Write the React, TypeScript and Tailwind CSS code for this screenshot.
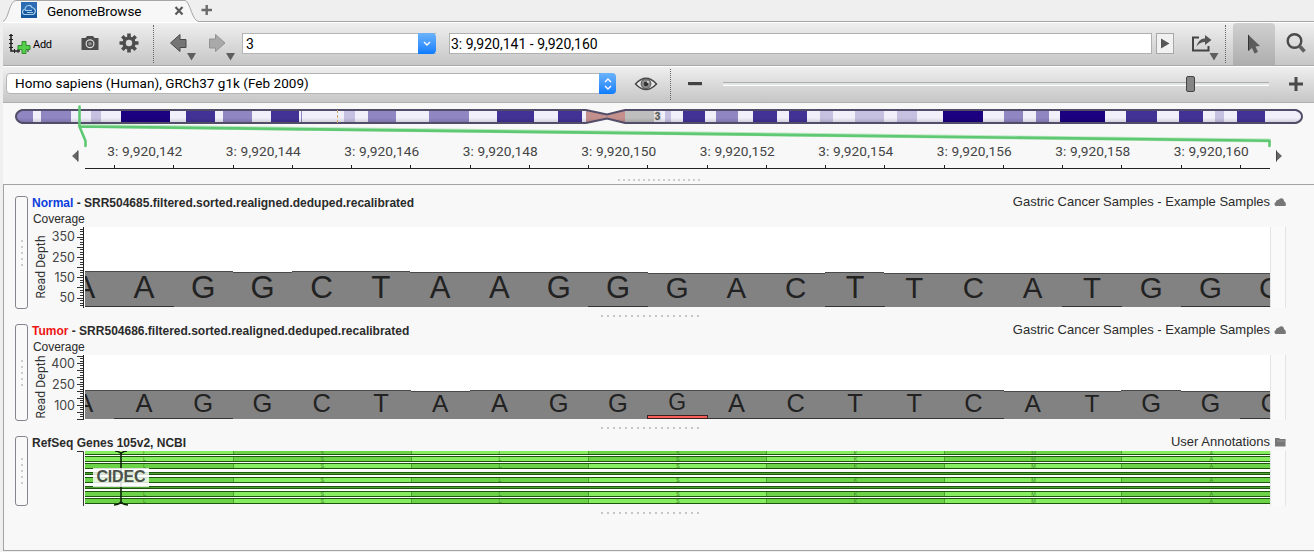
import React from "react";

const BASE_W = 59.25;
const FIRST_TICK = 114.6;

const bands: [number, number, string][] = [
  [15, 33, "#8f86c2"],
  [41, 71, "#8f86c2"],
  [91, 101, "#c6c1e1"],
  [121, 170, "#1b0080"],
  [186, 215, "#423296"],
  [223, 252, "#8f86c2"],
  [271, 299, "#423296"],
  [301, 302, "#8f86c2"],
  [344, 355, "#c6c1e1"],
  [368, 396, "#8f86c2"],
  [429, 469, "#8f86c2"],
  [497, 534, "#423296"],
  [558, 582, "#423296"],
  [625, 654, "#bebebe"],
  [665, 671, "#c6c1e1"],
  [683, 705, "#423296"],
  [716, 738, "#8f86c2"],
  [753, 777, "#423296"],
  [789, 807, "#423296"],
  [820, 833, "#c6c1e1"],
  [855, 884, "#c6c1e1"],
  [897, 917, "#c6c1e1"],
  [943, 983, "#1b0080"],
  [1004, 1023, "#8f86c2"],
  [1036, 1049, "#8f86c2"],
  [1060, 1105, "#1b0080"],
  [1126, 1157, "#423296"],
  [1179, 1203, "#423296"],
  [1215, 1224, "#c6c1e1"],
  [1237, 1265, "#423296"],
];

const sequence = "AAGGCTAAGGGACTTCATGGC".split("");

type Coverage = {
  y: number;
  h: number;
  labels: [number, number][];
  major: number;
  minor: number;
  firstTick: number;
  tops: [number, number, number][];
  floors: [number, number][];
  sizes: number[];
  baseline: number;
  variant?: boolean;
};

const normal: Coverage = {
  y: 227,
  h: 82,
  labels: [[350, 237], [250, 257.3], [150, 277.6], [50, 298]],
  major: 10.17,
  minor: 4,
  firstTick: 237,
  tops: [
    [85, 233, 271],
    [233, 292, 272],
    [292, 410, 271],
    [410, 648, 272],
    [648, 825, 273],
    [825, 884, 272],
    [884, 1270, 273],
  ],
  floors: [[85, 174], [588, 648], [825, 885], [1062, 1122], [1181, 1270]],
  sizes: [31.5, 31.5, 31.5, 31, 31.5, 31.5, 31, 31, 31, 31, 29.5, 29.5, 29.5, 30.5, 29.5, 29.5, 29.5, 29.5, 29.5, 29.5, 29.5],
  baseline: 297.7,
};

const tumor: Coverage = {
  y: 355,
  h: 66,
  labels: [[400, 363.7], [250, 384.5], [100, 405.4]],
  major: 6.95,
  minor: 3,
  firstTick: 363.6,
  tops: [
    [85, 411, 390],
    [411, 470, 391],
    [470, 1004, 390],
    [1004, 1121, 391],
    [1121, 1181, 390],
    [1181, 1270, 391],
  ],
  floors: [[114, 233], [708, 1004], [1240, 1270]],
  sizes: [25.5, 25.5, 25.5, 25.5, 25.5, 25.5, 24.5, 25.5, 25.5, 25.5, 23, 25.5, 25.5, 25.5, 25.5, 25.5, 24.5, 24.5, 25.5, 25, 25],
  baseline: 411.7,
  variant: true,
};

const geneRows: [number, number, boolean][] = [
  [450, 5, true],
  [456, 6, true],
  [463, 6, false],
  [477, 6, false],
  [491, 6, false],
  [498, 6, false],
];
const codonEdges = [85, 233, 411, 588, 766, 944, 1121, 1270];
const aminoAcids = ["L", "S", "L", "S", "K", "M", "A"];

function Divider() {
  return <div className="w-px my-[2px] self-stretch border-l border-dotted border-[#666]" />;
}

function Pic({ x, w, y = 23, h = 42, children }: { x: number; w: number; y?: number; h?: number; children: React.ReactNode }) {
  return (
    <svg width={w} height={h} viewBox={`${x} ${y} ${w} ${h}`} className="block shrink-0">
      {children}
    </svg>
  );
}

function Tabs() {
  return (
    <div className="relative h-[22px] shrink-0">
      <svg width={1314} height={22} className="absolute inset-0">
        <path d="M3 21.5 C9 19 9 1 16 .5 H185 C190 1 192 21.5 199 21.5 V22 H3Z" fill="#f7f7f7" />
        <path d="M3 21.5 C9 19 9 1 16 .5 H185 C190 1 192 21.5 199 21.5 H1314" fill="none" stroke="#a6a6a6" />
      </svg>
      <div className="relative flex h-full items-center pl-[21px]">
        <Pic x={21} y={0} w={16} h={22}>
          <rect x="21" y="2" width="16" height="16" fill="#17559c" />
          <rect x="21" y="2" width="16" height="8" fill="#2b6cb3" />
          <path d="M24.5 14.5 C21.5 13.5 22 9.5 25 9.5 C25.5 4.5 31 4.5 32 7.5 C36 8 36.5 13 33 14.5Z" fill="none" stroke="#a5cdec" strokeWidth="1.2" />
          <path d="M25 10.5 H32 M27 12.5 H33" stroke="#a5cdec" />
        </Pic>
        <span className="ml-[10px] w-[126px] font-[Roboto,sans-serif] text-[13.5px] leading-[22px] -tracking-[0.08px]">GenomeBrowse</span>
        <Pic x={173} y={0} w={42} h={22}>
          <path d="M175.500 7 L182.500 14.500 M182.500 7 L175.500 14.500" stroke="#5a5a5a" strokeWidth="2.2" />
          <path d="M201.500 10 H212 M206.700 5 V15" stroke="#6b6b6b" strokeWidth="2.4" />
        </Pic>
      </div>
    </div>
  );
}

function MainToolbar() {
  return (
    <div className="ml-[3px] flex h-[44px] shrink-0 border-t border-b border-t-white border-b-[#a9a9a9] bg-linear-to-b from-[#efefef] to-[#c6c6c6]">
      <div className="flex w-[150px] items-center">
        <Pic x={3} w={30}>
          <path d="M11 34 V51 H20" fill="none" stroke="#222" strokeWidth="1.6" />
          <path d="M9 35.500 H13 M9 39.500 H13 M9 43.500 H13 M9 47.500 H13 M14.500 49 V53 M18 49 V53 M28 49 V52" stroke="#222" />
          <path d="M22 41.500 H26 V45.500 H30 V49.500 H26 V53.500 H22 V49.500 H18 V45.500 H22Z" fill="#56cf4c" stroke="#2c8f2a" />
        </Pic>
        <span className="w-[48px] font-[Roboto,sans-serif] text-[11px] leading-none -tracking-[0.3px]">Add</span>
        <Pic x={81} w={72}>
          <path d="M81.500 38 H85.500 L87 36 H93 L94.500 38 H98.500 V50 H81.500Z" fill="#4d4d4d" />
          <circle cx="90" cy="43.800" r="3.900" fill="none" stroke="#ddd" strokeWidth="1.200" />
          <circle cx="90" cy="43.800" r="1.800" fill="#8d8d8d" />
          <g stroke="#4d4d4d" strokeWidth="3.600">
            <path d="M129 33.500 V52.500 M119.500 43 H138.500 M122.300 36.300 L135.700 49.700 M135.700 36.300 L122.300 49.700" />
          </g>
          <circle cx="129" cy="43" r="6.600" fill="#4d4d4d" />
          <circle cx="129" cy="43" r="3.200" fill="#dadada" />
        </Pic>
      </div>
      <Divider />
      <div className="flex w-[88px] items-center">
        <Pic x={154} w={88}>
          <path d="M170.500 43 L180 34.500 V39.500 H186 V47.500 H180 V51.500Z" fill="#757575" stroke="#484848" />
          <path d="M187 53 H196 L191.500 60.500Z" fill="#5e5e5e" />
          <path d="M225 43 L215.500 34.500 V39 H209.500 V48 H215.500 V51.500Z" fill="#a9a9a9" stroke="#929292" />
          <path d="M226 53 H235 L230.500 60.500Z" fill="#5e5e5e" />
        </Pic>
      </div>
      <div className="mt-[10px] flex h-[21px] w-[194px] border-t border-b border-l border-[#b4b4b4] bg-white">
        <span className="flex-1 pl-[3px] font-[Roboto,sans-serif] text-[14px] leading-[20px]">3</span>
        <div className="-my-px flex w-[18px] items-center justify-center rounded-r-[4px] bg-linear-to-b from-[#6bb3fa] to-[#067cff]">
          <svg width="8" height="5" viewBox="0 0 8 5"><path d="M1 1 L4 4 L7 1" fill="none" stroke="white" strokeWidth="1.400" /></svg>
        </div>
      </div>
      <div className="mt-[10px] ml-[13px] h-[21px] w-[703px] border border-[#b0b0b0] bg-white pl-[1px] font-[Roboto,sans-serif] text-[14px] leading-[20px]">
        3: 9,920,141 - 9,920,160
      </div>
      <Pic x={1152} w={73}>
        <rect x="1156.500" y="33.500" width="17" height="20" fill="#f1f1f1" stroke="#a8a8a8" />
        <path d="M1161 38.500 L1169.500 43.500 L1161 48.500Z" fill="#555" />
        <path d="M1199 37.500 H1193 V50.500 H1208.500 V46" fill="none" stroke="#444" strokeWidth="2" />
        <path d="M1196.500 46.500 C1198 41 1201 38.500 1205 38.500 V35 L1211.500 40 L1205 45 V42 C1201 42 1199 43.500 1196.500 46.500Z" fill="#555" />
        <path d="M1209.500 53 H1218.500 L1214 60.500Z" fill="#5e5e5e" />
      </Pic>
      <Divider />
      <div className="ml-[7px] flex w-[42px] items-center rounded-t-[4px] bg-linear-to-b from-[#d0d0d0] to-[#aeaeae]">
        <Pic x={1233} w={42}>
          <path d="M1248 34.500 L1260 46 L1255.500 46.500 L1258 52 L1254.500 53.500 L1252 48 L1248.500 51Z" fill="#5c5c5c" />
          <path d="M1248.500 35 V50.500" stroke="#333" />
        </Pic>
      </div>
      <Pic x={1275} w={39}>
        <circle cx="1294.500" cy="41" r="6.800" fill="none" stroke="#4b4b4b" strokeWidth="2.400" />
        <path d="M1299.500 46 L1304.500 51.500" stroke="#606060" strokeWidth="3.600" />
      </Pic>
    </div>
  );
}

function GenomeToolbar() {
  return (
    <div className="ml-[3px] flex h-[37px] shrink-0 border-t border-b border-t-white border-b-[#b0b0b0] bg-linear-to-b from-[#efefef] to-[#c6c6c6]">
      <div className="mt-[6px] ml-[3px] flex h-[21px] w-[610px] rounded-[4px] border border-[#b4b4b4] bg-white">
        <span className="flex-1 pl-[8px] font-[Roboto,sans-serif] text-[13.5px] leading-[19px] tracking-[0.04px]">
          Homo sapiens (Human), GRCh37 g1k (Feb 2009)
        </span>
        <div className="-my-px -mr-px flex w-[17px] items-center justify-center rounded-r-[4px] bg-linear-to-b from-[#6bb3fa] to-[#067cff]">
          <svg width="8" height="12" viewBox="0 0 8 12"><path d="M1 4 L4 1 L7 4 M1 8 L4 11 L7 8" fill="none" stroke="white" strokeWidth="1.400" /></svg>
        </div>
      </div>
      <Pic x={616} y={67} w={54} h={35}>
        <path d="M635.500 84 Q646 72.500 656.500 84 Q646 95 635.500 84Z" fill="#e8e8e8" stroke="#484848" strokeWidth="1.500" />
        <circle cx="646" cy="83.800" r="4.900" fill="#8b8b8b" stroke="#555" />
        <circle cx="646" cy="84" r="2.300" fill="#333" />
        <circle cx="648" cy="82" r="1.100" fill="#ddd" />
      </Pic>
      <Divider />
      <Pic x={671} y={67} w={52} h={35}>
        <path d="M688 83.500 H702" stroke="#424242" strokeWidth="3" />
        <path d="M689 85.500 H702.500" stroke="#bbb" />
      </Pic>
      <div className="relative mt-[15px] h-[4px] w-[546px] border-t border-b border-t-[#acacac] border-b-white bg-[#e2e6e6]">
        <div className="absolute -top-[7px] left-[463px] h-[16px] w-[9px] rounded-[2px] border border-[#444] bg-[#858585]" />
      </div>
      <Pic x={1269} y={67} w={45} h={35}>
        <path d="M1289 84 H1303 M1296 77 V91" stroke="#4a4a4a" strokeWidth="3" />
      </Pic>
    </div>
  );
}

function Overview() {
  const ticks = Array.from({ length: 20 }, (_, k) => Math.floor(FIRST_TICK + BASE_W * k));
  return (
    <div className="ml-[3px] h-[81px] shrink-0 bg-[#f8f8f8]">
      <svg width={1311} height={81} viewBox="3 103 1311 81" className="block">
        <defs>
          <clipPath id="chrom">
            <path d="M22 110 H586 L607 115 L625 110 H1296 Q1302 112 1302 116.500 Q1302 121 1296 123 H625 L607 118 L586 123 H22 Q16 121 16 116.500 Q16 112 22 110Z" />
          </clipPath>
          <linearGradient id="shade" x1="0" y1="0" x2="0" y2="1">
            <stop offset="0.600" stopColor="#000" stopOpacity="0" />
            <stop offset="1" stopColor="#000" stopOpacity=".16" />
          </linearGradient>
        </defs>
        <g clipPath="url(#chrom)">
          <rect x="15" y="110" width="1290" height="13" fill="#f1effa" />
          {bands.map(([x1, x2, fill]) => (
            <rect key={x1} x={x1} y="110" width={x2 - x1} height="13" fill={fill} />
          ))}
          <rect x="586" y="110" width="39" height="13" fill="#c4908e" />
          <rect x="15" y="110" width="1290" height="13" fill="url(#shade)" />
        </g>
        <path
          d="M22 110 H586 L607 114.500 L625 110 H1296 Q1302 112 1302 116.500 Q1302 121 1296 123 H625 L607 118.500 L586 123 H22 Q16 121 16 116.500 Q16 112 22 110Z"
          fill="none"
          stroke="#524d68"
          strokeWidth="2"
        />
        <path d="M337.500 110 V124" stroke="#d5a56b" strokeDasharray="3 2" />
        <text x="657.500" y="120" textAnchor="middle" fontSize="10" fontWeight="bold" fontFamily="Liberation Sans, sans-serif" fill="#555" stroke="#ccc" strokeWidth="2" paintOrder="stroke">3</text>
        <g fill="none" strokeLinecap="round" strokeLinejoin="round">
          <path d="M79.500 126 L1269 140.500" stroke="#bfe9c5" strokeWidth="4" />
          <path d="M79.500 106.500 V126.500 L85.500 141 V146 M79.500 126.500 L1269.500 140.700 V146" stroke="#5fc872" strokeWidth="2.600" />
        </g>
        <path d="M78 150.500 V161.500 L72 156Z M1276 150.500 V161.500 L1282 156Z" fill="#666" />
        <path d="M78 150.500 V161.500 M1276.500 150.500 V161.500" stroke="#444" />
        <g fontFamily="Roboto, sans-serif" fontSize="13.700" fill="#444" textAnchor="middle">
          {Array.from({ length: 10 }, (_, i) => (
            <text key={i} x={144.800 + i * 118.500} y="156.300" textLength="75">
              {`3: 9,920,${142 + i * 2}`}
            </text>
          ))}
        </g>
        <rect x="85" y="168" width="1185" height="1" fill="#222" />
        {ticks.map((x) => (
          <rect key={x} x={x} y="165" width="1" height="3" fill="#222" />
        ))}
        {Array.from({ length: 17 }, (_, i) => (
          <rect key={i} x={618 + i * 5} y="179" width="2" height="2" fill="#ccc" />
        ))}
      </svg>
    </div>
  );
}

function Splitter() {
  return (
    <svg width={1310} height={15} viewBox="4 309 1310 15" className="block shrink-0">
      {Array.from({ length: 17 }, (_, i) => (
        <rect key={i} x={601 + i * 6} y="315" width="2" height="2" fill="#c6c6c6" />
      ))}
    </svg>
  );
}

function Cloud() {
  return (
    <svg width="12" height="10" viewBox="0 0 12 10">
      <path d="M1.500 9 Q-.8 7 1.800 5 Q2.500 2.500 4.500 2.800 Q6 .5 8.500 1.500 Q10 2.300 10 4 Q13 6.500 11.300 9Z" fill="#777" />
    </svg>
  );
}

function Folder() {
  return (
    <svg width="12" height="10" viewBox="0 0 12 10">
      <path d="M1 1 H5 L6 2 H11.500 V9.500 H1Z" fill="#777" />
      <path d="M3 4 H12" stroke="#999" />
    </svg>
  );
}

function CoverageChart({ data }: { data: Coverage }) {
  const bottom = data.variant ? 419 : 307;
  const step = data.major / data.minor;
  const end = data.y + data.h - 1;
  const ticks: { y: number; long: boolean }[] = [];
  for (let i = -20; i < 60; i++) {
    const y = data.firstTick + i * step;
    if (y > data.y && y < end) ticks.push({ y, long: i % data.minor === 0 });
  }
  const clip = data.variant ? "tumor" : "normal";
  return (
    <svg width={1260} height={data.h} viewBox={`30 ${data.y} 1260 ${data.h}`} className="block">
      <clipPath id={clip}>
        <rect x="85" y={data.y} width="1185" height={data.h} />
      </clipPath>
      <rect x="84" y={data.y} width="1186" height={bottom - data.y} fill="white" />
      <rect x="1270" y={data.y} width="16" height={data.h - 1} fill="#fafafa" />
      <rect x="1270" y={data.y} width="1" height={data.h - 1} fill="#e4e4e4" />
      <rect x="1285" y={data.y} width="1" height={data.h - 1} fill="#e4e4e4" />
      <text
        transform={`translate(44.500 ${data.variant ? 387 : 267}) rotate(-90)`}
        textAnchor="middle"
        textLength="63"
        fontSize="12"
        fontFamily="Roboto, sans-serif"
        fill="#333"
      >
        Read Depth
      </text>
      <g fontFamily="Inter, sans-serif" fontSize="12.500" fill="#444" textAnchor="end">
        {data.labels.map(([value, y]) => (
          <text key={value} x="75" y={y + 4.200}>{value}</text>
        ))}
      </g>
      <rect x="83" y={data.y} width="1" height={end - data.y} fill="#222" />
      {ticks.map((t) => (
        <rect key={t.y} x={t.long ? 77 : 80} y={Math.floor(t.y)} width={t.long ? 6 : 3} height="1" fill="#333" />
      ))}
      {data.tops.map(([x1, x2, y]) => (
        <React.Fragment key={x1}>
          <rect x={x1} y={y} width={x2 - x1} height={bottom - y} fill="#828282" />
          <rect x={x1} y={y} width={x2 - x1} height="1" fill="#4a4a4a" />
        </React.Fragment>
      ))}
      {data.floors.map(([x1, x2]) => (
        <rect key={x1} x={x1} y={bottom - 1} width={x2 - x1} height="1" fill="#333" />
      ))}
      {data.variant && <rect x="647.500" y="415.500" width="60" height="3" fill="#f96158" stroke="#3a2020" />}
      <g clipPath={`url(#${clip})`} fontFamily="Liberation Sans, sans-serif" fill="#222" textAnchor="middle">
        {sequence.map((base, i) => (
          <text key={i} x={84.700 + i * BASE_W} y={data.variant && i === 10 ? 409.500 : data.baseline} fontSize={data.sizes[i]}>
            {base}
          </text>
        ))}
      </g>
    </svg>
  );
}

function GeneChart() {
  return (
    <svg width={1260} height={55} viewBox="30 451 1260 55" className="block">
      <rect x="85" y="451" width="1185" height="53" fill="white" />
      <path d="M77 451.500 H83.500 V506" fill="none" stroke="#333" />
      <rect x="1270" y="451" width="16" height="55" fill="#fafafa" />
      <rect x="1270" y="451" width="1" height="55" fill="#e4e4e4" />
      <rect x="1285" y="451" width="1" height="55" fill="#e4e4e4" />
      {geneRows.map(([y, h, lightFirst]) => (
        <g key={y}>
          {aminoAcids.map((aa, i) => {
            const x = codonEdges[i];
            const w = codonEdges[i + 1] - x;
            const light = (i % 2 === 0) === lightFirst;
            return (
              <g key={i}>
                <rect x={x} y={y} width={w} height={h} fill={light ? "#86ec60" : "#6cd348"} />
                {i > 0 && <rect x={x} y={y} width="1" height={h} fill="#4fa434" />}
                <text x={144.500 + i * 177.800} y={y + 5} fontSize="5.500" textAnchor="middle" fontFamily="Liberation Sans, sans-serif" fill="#3f8a2b">
                  {aa}
                </text>
              </g>
            );
          })}
          {y > 450 && <rect x="85" y={y} width="1185" height="1" fill="#1d570c" />}
          <rect x="85" y={y + h - 1} width="1185" height="1" fill="#1d570c" />
        </g>
      ))}
      {[472, 486].map((y) => (
        <g key={y}>
          <rect x="85" y={y} width="1185" height="3" fill="#1d570c" />
          <rect x="85" y={y + 1} width="1185" height="1" fill="#4fa434" />
        </g>
      ))}
      <path d="M121 452 V504 M115 451 Q120 451.500 121 454 Q122 451.500 127 451 M114 505 Q120 504.500 121 501.500 Q122 504.500 128 505" fill="none" stroke="#10240a" strokeWidth="1.600" />
      <rect x="93" y="468" width="56" height="19" fill="white" fillOpacity=".82" />
      <text x="121" y="482" textAnchor="middle" textLength="49" fontSize="16" fontWeight="bold" fontFamily="Liberation Sans, sans-serif" fill="#4b514a">
        CIDEC
      </text>
    </svg>
  );
}

function Track({ height, title, source, icon, sub, children }: {
  height: string;
  title: React.ReactNode;
  source: string;
  icon: React.ReactNode;
  sub?: string;
  children: React.ReactNode;
}) {
  return (
    <div className={`ml-[11px] flex shrink-0 ${height}`}>
      <div className="flex w-[13px] shrink-0 flex-col items-center justify-center gap-[4px] rounded-[3px] border border-[#85858f] bg-[#f9f9f9]">
        {[0, 1, 2, 3, 4].map((i) => (
          <div key={i} className="h-[2px] w-[2px] bg-[#ccc]" />
        ))}
      </div>
      <div className="ml-[2px] w-[1260px]">
        <div className="flex h-[15px] items-start justify-between pr-[4px] pl-[2px] text-[#2b2b2b]">
          <span className="text-[12px] leading-[15px] font-bold">{title}</span>
          <span className="flex items-center gap-[4px] text-[13px] leading-[12px]">
            {source}
            {icon}
          </span>
        </div>
        {sub && <div className="h-[16px] pl-[3px] text-[12px] leading-[17px] -tracking-[0.05px] text-[#2b2b2b]">{sub}</div>}
        {children}
      </div>
    </div>
  );
}

export default function App() {
  return (
    <div className="flex h-[552px] w-[1314px] flex-col overflow-hidden bg-[#efefef] font-['Liberation_Sans',Arial,sans-serif] text-black">
      <Tabs />
      <MainToolbar />
      <GenomeToolbar />
      <Overview />
      <div className="ml-[3px] flex h-[367px] shrink-0 flex-col border-t border-b border-l border-[#a3a3a3] bg-[#f8f8f8] pt-[11px]">
        <Track
          height="h-[113px]"
          title={<><span className="text-[#0a3ddc]">Normal</span> - SRR504685.filtered.sorted.realigned.deduped.recalibrated</>}
          source="Gastric Cancer Samples - Example Samples"
          icon={<Cloud />}
          sub="Coverage"
        >
          <CoverageChart data={normal} />
        </Track>
        <Splitter />
        <Track
          height="h-[97px]"
          title={<><span className="text-[#ee1414]">Tumor</span> - SRR504686.filtered.sorted.realigned.deduped.recalibrated</>}
          source="Gastric Cancer Samples - Example Samples"
          icon={<Cloud />}
          sub="Coverage"
        >
          <CoverageChart data={tumor} />
        </Track>
        <Splitter />
        <Track height="h-[70px]" title="RefSeq Genes 105v2, NCBI" source="User Annotations" icon={<Folder />}>
          <GeneChart />
        </Track>
        <Splitter />
      </div>
    </div>
  );
}
